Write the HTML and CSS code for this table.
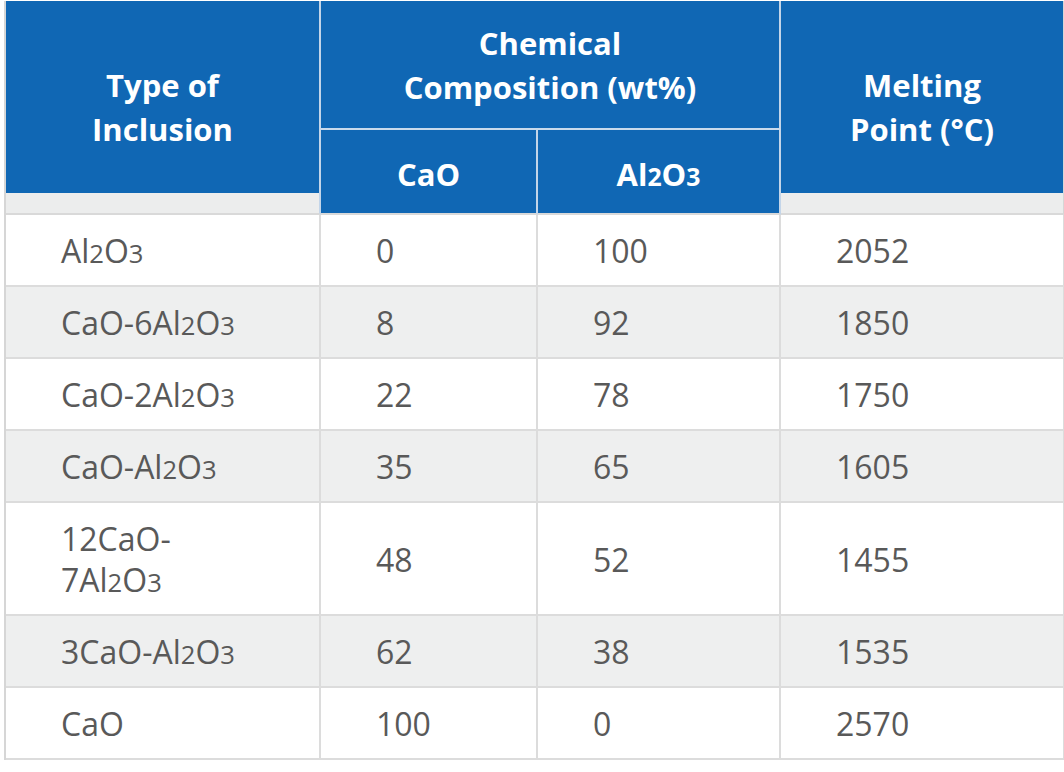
FILE: index.html
```html
<!DOCTYPE html>
<html lang="en">
<head>
<meta charset="utf-8">
<title>Inclusion melting points</title>
<link rel="stylesheet" href="styles.css">
</head>
<body>
<table class="data">
  <colgroup>
    <col class="c1">
    <col class="c2">
    <col class="c3">
    <col class="c4">
  </colgroup>
  <thead>
    <tr class="h1">
      <th rowspan="2" class="tall">Type of<br>Inclusion</th>
      <th colspan="2" class="group">Chemical<br>Composition (wt%)</th>
      <th rowspan="2" class="tall last">Melting<br>Point (°C)</th>
    </tr>
    <tr class="h2">
      <th class="sub-h">CaO</th>
      <th class="sub-h">Al<span class="sub">2</span>O<span class="sub">3</span></th>
    </tr>
  </thead>
  <tbody>
    <tr><td>Al<span class="sub">2</span>O<span class="sub">3</span></td><td>0</td><td>100</td><td class="last">2052</td></tr>
    <tr class="alt"><td>CaO-6Al<span class="sub">2</span>O<span class="sub">3</span></td><td>8</td><td>92</td><td class="last">1850</td></tr>
    <tr><td>CaO-2Al<span class="sub">2</span>O<span class="sub">3</span></td><td>22</td><td>78</td><td class="last">1750</td></tr>
    <tr class="alt"><td>CaO-Al<span class="sub">2</span>O<span class="sub">3</span></td><td>35</td><td>65</td><td class="last">1605</td></tr>
    <tr><td>12CaO-<wbr>7Al<span class="sub">2</span>O<span class="sub">3</span></td><td>48</td><td>52</td><td class="last">1455</td></tr>
    <tr class="alt"><td>3CaO-Al<span class="sub">2</span>O<span class="sub">3</span></td><td>62</td><td>38</td><td class="last">1535</td></tr>
    <tr><td>CaO</td><td>100</td><td>0</td><td class="last">2570</td></tr>
  </tbody>
</table>
</body>
</html>
```
FILE: styles.css
```css
html, body {
  margin: 0;
  padding: 0;
  background: #ffffff;
}

.data {
  margin: 1px 0 0 4px;
  width: 1059px;
  border-collapse: separate;
  border-spacing: 0;
  table-layout: fixed;
  font-family: "Open Sans", "Liberation Sans", sans-serif;
  border-left: 2px solid #d6d6d6;
}

.c1 { width: 315px; }
.c2 { width: 217px; }
.c3 { width: 243px; }
.c4 { width: 284px; }

.data th {
  padding: 0;
  color: #ffffff;
  font-weight: 700;
  font-size: 31px;
  line-height: 44px;
  text-align: center;
  vertical-align: middle;
  background: #1067b4;
  border-right: 2px solid #c3d5e9;
}

.data th.last {
  border-right: 2px solid #d6d6d6;
}

.data th.tall {
  height: 212px;
  background: linear-gradient(to bottom, #1067b4 0, #1067b4 192px, #eceded 192px, #eceded 100%);
  border-bottom: 2px solid #d9d9d9;
}

.data th.group {
  height: 125px;
  border-bottom: 2px solid #c9daec;
}

.data th.sub-h {
  height: 83px;
  padding-top: 4px;
  box-sizing: border-box;
  border-bottom: 2px solid #d9d9d9;
}

.data td {
  padding: 15px 60px 14px 55px;
  color: #595959;
  font-size: 32px;
  line-height: 41px;
  vertical-align: middle;
  background: #ffffff;
  border-right: 2px solid #dcdcdc;
  border-bottom: 2px solid #dcdcdc;
}

.data td.last {
  border-right: 2px solid #dcdcdc;
}

.data tr.alt td {
  background: #eeefef;
}

.sub {
  font-size: 0.8em;
  line-height: 1;
}
```
